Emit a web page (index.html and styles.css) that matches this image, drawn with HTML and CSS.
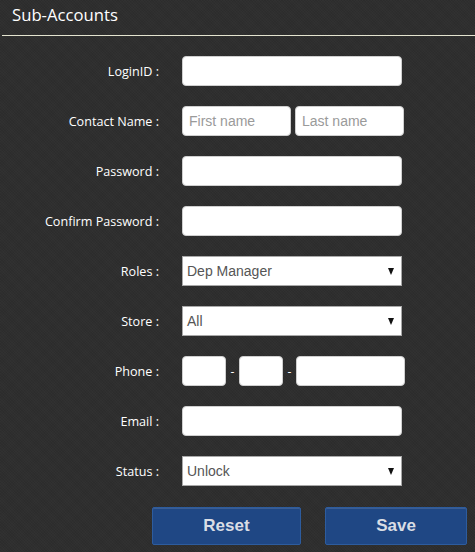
FILE: index.html
```html
<!DOCTYPE html>
<html>
<head>
<meta charset="utf-8">
<link rel="stylesheet" href="styles.css">
</head>
<body>
<div class="header"><h1 class="title">Sub-Accounts</h1></div>
<form class="form">
  <div class="row"><label class="label">LoginID :</label><div class="field"><input class="input w220" type="text"></div></div>
  <div class="row"><label class="label">Contact Name :</label><div class="field"><input class="input w109" type="text" placeholder="First name"><input class="input w109" type="text" placeholder="Last name"></div></div>
  <div class="row"><label class="label">Password :</label><div class="field"><input class="input w220" type="password"></div></div>
  <div class="row"><label class="label">Confirm Password :</label><div class="field"><input class="input w220" type="password"></div></div>
  <div class="row"><label class="label">Roles :</label><div class="field"><div class="select"><span>Dep Manager</span></div></div></div>
  <div class="row"><label class="label">Store :</label><div class="field"><div class="select"><span>All</span></div></div></div>
  <div class="row"><label class="label">Phone :</label><div class="field phone"><input class="input w44" type="text"><span class="dash">-</span><input class="input w44" type="text"><span class="dash">-</span><input class="input w109" type="text"></div></div>
  <div class="row"><label class="label">Email :</label><div class="field"><input class="input w220" type="text"></div></div>
  <div class="row"><label class="label">Status :</label><div class="field"><div class="select"><span>Unlock</span></div></div></div>
  <div class="buttons">
    <button type="button" class="btn reset">Reset</button>
    <button type="button" class="btn save">Save</button>
  </div>
</form>
</body>
</html>
```
FILE: styles.css
```css
html, body {
  margin: 0;
  padding: 0;
}
body {
  width: 475px;
  height: 552px;
  overflow: hidden;
  background-color: #2e2e2e;
  background-image:
    repeating-linear-gradient(45deg, rgba(255,255,255,0.015) 0 1px, transparent 1px 2px),
    repeating-linear-gradient(-45deg, rgba(0,0,0,0.05) 0 1px, transparent 1px 2px);
  font-family: "Open Sans", "Noto Sans", sans-serif;
}
.header {
  height: 35px;
  margin-left: 2px;
  border-bottom: 1px solid #e4e4d0;
}
.title {
  margin: 0;
  padding: 3px 0 0 10px;
  font-size: 16.7px;
  font-weight: normal;
  color: #ffffff;
  line-height: 24px;
}
.form {
  padding-top: 20px;
  display: flex;
  flex-direction: column;
  gap: 20px;
}
.row {
  display: grid;
  grid-template-columns: 159px auto;
  column-gap: 23px;
  align-items: center;
  height: 30px;
}
.label {
  text-align: right;
  color: #ffffff;
  font-size: 12.6px;
  white-space: nowrap;
}
.field {
  display: flex;
  gap: 4px;
  align-items: center;
}
.input {
  box-sizing: border-box;
  height: 30px;
  border: 1px solid #cfcfcf;
  border-radius: 4px;
  background: #ffffff;
  padding: 0 6px;
  font-family: "Liberation Sans", Arial, sans-serif;
  font-size: 14px;
  color: #555;
  outline: none;
}
.input::placeholder {
  color: #9a9a9a;
}
.w220 { width: 220px; }
.w109 { width: 109px; }
.w44 { width: 44px; }
.dash {
  width: 5px;
  color: #ffffff;
  font-size: 12px;
  text-align: center;
}
.select {
  position: relative;
  box-sizing: border-box;
  width: 220px;
  height: 30px;
  background: #ffffff;
  border: 1px solid #a9a9a9;
  display: flex;
  align-items: center;
  padding-left: 4px;
  font-family: "Liberation Sans", Arial, sans-serif;
  font-size: 14px;
  color: #555;
}
.select::after {
  content: "";
  position: absolute;
  right: 7px;
  top: 11px;
  border-left: 3.5px solid transparent;
  border-right: 3.5px solid transparent;
  border-top: 7px solid #111;
}
.buttons {
  display: flex;
  gap: 24px;
  margin-left: 152px;
  margin-top: 1px;
}
.btn {
  height: 38px;
  box-sizing: border-box;
  background: #1f4784;
  border: 1px solid #2d5c9e;
  border-radius: 2px;
  color: #d9dde4;
  font-family: "Liberation Sans", Arial, sans-serif;
  font-weight: bold;
  font-size: 17px;
  box-shadow: inset 0 1px 0 rgba(255,255,255,0.12);
  padding: 0;
}
.reset { width: 149px; }
.save { width: 142px; }
```
